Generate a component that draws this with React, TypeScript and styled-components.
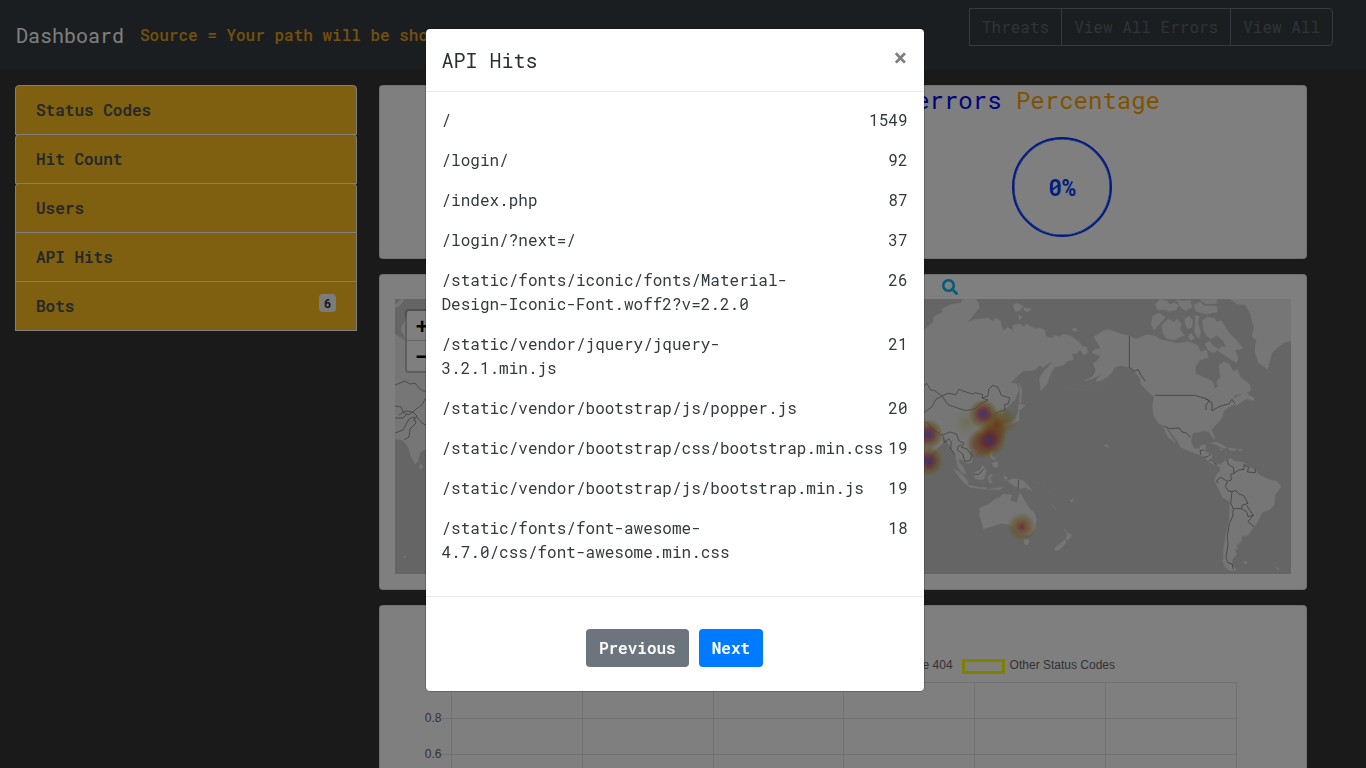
import React from "react";
import styled, { createGlobalStyle } from "styled-components";
import { FaSearch } from "react-icons/fa";

const Global = createGlobalStyle`
  * { box-sizing: border-box; }
  html, body { margin: 0; height: 100%; overflow: hidden; }
  body {
    background: #343434;
    color: #2a2f33;
    font: 400 16px/24px "Roboto Mono", "Liberation Mono", monospace;
  }
`;

const Page = styled.div`
  height: 768px;
  overflow: hidden;
`;

const Navbar = styled.header`
  display: flex;
  align-items: flex-start;
  height: 70px;
  padding: 8px 33px 0 16px;
  background: #343d42;
`;

const Brand = styled.div`
  margin-top: 12px;
  font-size: 20px;
  line-height: 30px;
  width: 108px;
  margin-right: 16px;
  color: #fff;
`;

const Source = styled.div`
  margin-top: 15px;
  font-weight: 500;
  color: #e8a21a;
`;

const ButtonGroup = styled.div`
  display: flex;
  margin-left: auto;
`;

const OutlineButton = styled.button`
  height: 38px;
  padding: 0 12px;
  font: inherit;
  color: #5f666c;
  background: transparent;
  border: 1px solid #6c757d;
  & + & { margin-left: -1px; }
  &:last-child { border-radius: 0 4px 4px 0; }
`;

const Content = styled.div`
  display: flex;
  align-items: flex-start;
  gap: 22px;
  padding: 15px 59px 0 15px;
`;

const Sidebar = styled.nav`
  flex: 0 0 342px;
`;

const SideItem = styled.div<{ $rounded?: boolean }>`
  display: flex;
  justify-content: space-between;
  height: 50px;
  margin-bottom: -1px;
  padding: 12px 20px;
  background: #ffc020;
  border: 1px solid #fff;
  border-radius: ${(p) => (p.$rounded ? "4px 4px 0 0" : "0")};
  color: #495057;
  font-weight: 500;
  -webkit-text-stroke: 0.2px currentColor;
`;

const Badge = styled.span`
  width: 17px;
  height: 18px;
  border-radius: 4px;
  background: #f8f9fa;
  color: #212529;
  font-size: 12px;
  line-height: 19px;
  text-align: center;
`;

const Main = styled.main`
  flex: 1;
  min-width: 0;
  display: flex;
  flex-direction: column;
  gap: 15px;
`;

const Card = styled.section<{ $height: number }>`
  height: ${(p) => p.$height}px;
  background: #fff;
  border: 1px solid rgba(0, 0, 0, 0.125);
  border-radius: 4px;
`;

const Title = styled.h2`
  margin: 0;
  padding-right: 146px;
  text-align: right;
  font-size: 24px;
  line-height: 29px;
  font-weight: 400;
  color: orange;
  span { color: blue; }
`;

const GaugeRow = styled.div`
  display: flex;
  justify-content: flex-end;
  padding: 22px 194px 0 0;
`;

const Gauge = styled.div`
  display: grid;
  place-items: center;
  width: 100px;
  height: 100px;
  border: 2px solid #0038ff;
  box-shadow: inset 0 0 0 0.5px #0038ff;
  border-radius: 50%;
  font-size: 23px;
  font-weight: 600;
  color: #0038ff;
`;

const MapCard = styled(Card)`
  display: flex;
  flex-direction: column;
  padding: 0 15px;
`;

const SearchRow = styled.div`
  display: flex;
  justify-content: flex-end;
  align-items: center;
  height: 24px;
  padding-right: 333px;
  color: #00b8f4;
`;

const MapArea = styled.div`
  position: relative;
  height: 275px;
`;

const ZoomControl = styled.div`
  position: absolute;
  left: 10px;
  top: 10px;
  width: 34px;
  border: 2px solid rgba(0, 0, 0, 0.2);
  background-clip: padding-box;
  border-radius: 4px;
  overflow: hidden;
`;

const ZoomButton = styled.div`
  height: 30px;
  padding-top: 4px;
  background: #fff;
  color: #000;
  font: 700 22px/28px "Liberation Mono", monospace;
  text-align: center;
  &:first-child { border-bottom: 1px solid #ccc; }
`;

const ChartCard = styled(Card)`
  padding: 50px 69px 0 24px;
  font: 12px/18px "Liberation Sans", Arial, sans-serif;
  color: #666;
`;

const Legend = styled.div`
  display: flex;
  justify-content: flex-end;
  gap: 9px;
  padding-right: 122px;
  height: 26px;
`;

const LegendItem = styled.div`
  display: flex;
  align-items: center;
  height: 18px;
  gap: 5px;
`;

const Swatch = styled.span<{ $color: string }>`
  width: 43px;
  height: 15px;
  margin-top: 2px;
  border: 3px solid ${(p) => p.$color};
  background: rgba(255, 255, 200, 0.3);
`;

const Backdrop = styled.div`
  position: fixed;
  inset: 0;
  display: flex;
  justify-content: center;
  align-items: flex-start;
  padding: 28px 17px 0 0;
  background: rgba(0, 0, 0, 0.5);
`;

const Dialog = styled.div`
  width: 500px;
  background: #fff;
  background-clip: padding-box;
  border: 1px solid rgba(0, 0, 0, 0.2);
  border-radius: 5px;
`;

const DialogHeader = styled.div`
  display: flex;
  justify-content: space-between;
  padding: 16px;
  height: 63px;
  border-bottom: 1px solid #e9ecef;
  font-size: 20px;
  line-height: 30px;
`;

const Close = styled.span`
  font-size: 24px;
  line-height: 24px;
  font-weight: 700;
  color: #7f7f7f;
`;

const DialogBody = styled.div`
  display: flex;
  flex-direction: column;
  gap: 16px;
  height: 504px;
  padding: 16px;
  color: #34393d;
`;

const HitRow = styled.div`
  display: flex;
  justify-content: space-between;
  white-space: pre;
`;

const DialogFooter = styled.div`
  display: flex;
  justify-content: center;
  gap: 10px;
  height: 95px;
  padding-top: 32px;
  border-top: 1px solid #e9ecef;
`;

const Button = styled.button<{ $bg: string }>`
  height: 38px;
  padding: 0 13px;
  border: 0;
  border-radius: 4px;
  font: inherit;
  font-weight: 500;
  -webkit-text-stroke: 0.2px currentColor;
  color: #fff;
  background: ${(p) => p.$bg};
`;

const hits: [string, number][] = [
  ["/", 1549],
  ["/login/", 92],
  ["/index.php", 87],
  ["/login/?next=/", 37],
  ["/static/fonts/iconic/fonts/Material-\nDesign-Iconic-Font.woff2?v=2.2.0", 26],
  ["/static/vendor/jquery/jquery-\n3.2.1.min.js", 21],
  ["/static/vendor/bootstrap/js/popper.js", 20],
  ["/static/vendor/bootstrap/css/bootstrap.min.css", 19],
  ["/static/vendor/bootstrap/js/bootstrap.min.js", 19],
  ["/static/fonts/font-awesome-\n4.7.0/css/font-awesome.min.css", 18],
];

const eastLand = [
  // Eurasia
  "M0 195L12 180L30 165L38 158L42 140L70 125L65 118L90 105L125 98L125 90L140 85H165L175 97L178 112L165 130L142 158L165 148L205 145L220 155L225 145L242 152L243 168L252 183L262 172L280 182L278 165L300 163L312 170L320 162L330 168L345 176L360 174L375 181L378 200L400 205L403 196L418 200L430 193L450 197L465 208L478 217L486 228L500 232L503 247L492 256L480 240L472 250L455 252L460 268L440 275L430 286L405 290L395 305L388 320L382 340L362 362L359 325L372 302L386 290L397 272L378 284L370 294L360 285L345 300L310 303L292 318L272 338L292 343L296 360L285 390L262 410L250 420L250 450L242 455L235 440L228 425L215 434L205 430L212 450L225 455L215 470L232 490L230 510L215 530L195 540L175 545L165 553L152 540L148 552L158 570L154 578L142 580L128 572L118 565L116 576L130 592L138 612L128 610L114 592L108 560L98 540L88 524L72 500L68 520L35 550L25 575L15 600L0 570Z",
  // Sakhalin and Japan
  "M298 340L306 362L303 395L298 402L300 370Z",
  "M297 402L316 406L303 418L294 420Z",
  "M298 420L297 450L284 460L262 466L248 474L252 462L275 455L288 443Z",
  // Arctic islands
  "M280 105L290 100L310 108L300 122L284 124ZM312 113L334 118L325 125L312 122ZM296 135L306 142L298 150ZM456 178L468 174L472 181L462 184Z",
  // Indonesia and the Philippines
  "M100 596L120 608L146 636L140 646L118 622ZM142 644L175 652L200 653L200 658L150 652ZM160 610L180 600L188 586L200 602L190 630L166 626ZM205 620L214 612L218 616L210 624L216 638L208 640ZM210 540L218 542L215 558L226 566L220 570L210 558ZM216 580L232 574L234 590L222 592ZM250 618L262 622L258 632ZM262 632L280 626L310 632L330 654L336 662L316 652L300 656L280 646ZM206 658L250 652L240 659Z",
  // Australia and Tasmania
  "M180 714L205 704L225 688L238 684L250 672L276 676L270 690L290 700L300 668L312 690L326 712L344 730L349 750L344 778L325 795L300 796L284 776L268 763L245 760L220 768L190 776L186 760L179 735ZM312 808L328 810L322 825L314 822Z",
  // New Zealand
  "M433 776L444 790L456 794L446 810L438 806L442 794ZM436 808L438 818L420 838L406 842L404 835Z",
  // Scattered Pacific islands
  "M394 705L408 716L402 712ZM450 692L462 686L456 696ZM552 527L560 524L568 534Z",
];

const westLand = [
  // North America
  "M-12 212L-18 200L10 182L25 179L55 190L88 197L107 208L140 194L165 198L180 208L200 213L232 220L265 215L292 226L302 246L320 240L325 262L300 270L287 288L286 310L310 322L337 334L345 358L354 348L350 335L362 322L358 302L358 285L372 276L388 282L400 305L412 298L420 320L450 345L452 362L430 370L405 375L398 386L440 366L444 374L462 384L462 391L438 387L410 406L405 402L385 412L370 425L365 445L345 467L334 480L346 504L342 508L328 486L310 482L295 487L278 488L273 515L282 536L298 537L303 526L318 524L314 543L322 548L337 555L333 574L345 584L359 582L358 590L342 583L325 575L310 558L285 550L242 532L232 512L205 477L196 472L214 500L227 519L204 502L190 468L175 459L161 435L158 408L162 382L142 362L124 344L120 325L103 305L88 292L60 286L45 291L25 315L-10 335L-10 328L8 310L-12 302L-20 280L-5 270L0 258L-25 248L-15 238L2 236L-4 222Z",
  // Alaska Peninsula
  "M20 292L44 288L36 306L22 320L-2 334L2 322L16 312ZM-10 296L8 310L-20 325L-45 332L-20 318Z",
  // Greenland
  "M388 86H573V212L552 217L530 235L515 250L503 297L476 278L465 245L466 225L470 212L456 200L462 172L450 130L436 104L412 102Z",
  // Canadian Arctic
  "M158 138L178 130L196 142L186 154L175 164L162 180L154 165ZM185 165L204 148L222 156L232 148L244 160L240 180L254 196L238 202L224 210L200 206L190 192ZM165 104L180 88L200 92L210 104L222 98L236 106L228 120L208 124L190 118L174 120ZM230 90L250 94L270 90L276 112L256 122L242 112ZM254 148L266 138L278 150L276 172L262 176L256 162ZM286 136L298 140L294 158L302 184L296 206L284 188ZM282 104L300 96L312 108L350 108L352 126L320 132L288 124ZM300 90L350 88L350 100L320 102ZM308 150L324 142L344 146L350 156L364 152L376 170L388 190L408 210L428 234L414 240L405 235L414 266L410 278L392 268L374 256L354 244L364 230L378 232L370 212L350 196L334 206L322 200L310 178ZM315 222L330 214L342 230L356 238L342 248L324 240ZM272 190L284 204L274 212L264 200Z",
  // Caribbean
  "M332 520L350 516L372 528L382 534L366 534L350 524ZM386 534L410 536L404 543L388 540ZM358 538L368 538L366 542ZM416 538H424V542H416Z",
  // South America
  "M360 585L375 572L393 565L402 573L430 577L445 590L465 598L475 613L510 630L530 634L542 648L538 658L525 675L522 705L510 718L485 728L480 742L466 765L450 785L444 796L425 799L424 814L410 825L412 838L404 840L410 852L396 870L396 885L410 900L390 903L376 892L369 875L371 840L379 790L388 750L390 697L368 681L355 655L344 632L350 612L360 603Z",
  "M430 876L442 874L438 882ZM528 890L538 898L532 898Z",
];

const eastBorders =
  "M12 348L20 340L32 360L44 362L66 378L48 388L36 410L12 428M66 378L84 370L108 374L116 358L138 366L158 372L166 368L188 374L186 384L204 390L180 402L166 416L138 422L112 414L84 404ZM186 384L204 378L206 358L218 346L234 352L244 376L270 384L264 402L254 404V420L226 430M12 456L24 460L36 476L66 496L90 486L110 492L116 512L132 520L124 532L140 536L156 556L150 572L134 574L128 552L112 540L114 530L124 524M68 498L74 518L86 506L94 516L92 536L106 556M160 612L176 614L190 598M295 630V656";
const westBorders =
  "M88 197V292L104 304L114 298L122 314L136 334M165 376H284L312 384L336 398V422L362 408L386 402L396 388L404 400M316 384L328 392L318 406V420M192 468L208 476L238 474L246 486L258 488L272 502M303 554L300 542L312 540M312 562L324 560L332 552M326 574L334 568M344 580L350 585M380 568L386 584L400 592L402 610L392 614L394 630L382 634L362 622L350 632L354 640M402 610L416 600L432 598L432 584L446 592L442 606L466 608L466 596M382 634L376 650L386 664L396 664L408 662L414 670L432 678L444 700L426 706L424 716H400L392 698L396 664M400 716L398 740L388 760L382 800L384 824L378 862L384 878L396 882L400 898M424 716L440 726L444 740L460 736L440 706M460 736L444 754L462 770";

const heat: [number, number, number, string][] = [
  [140, 458, 40, "faint"],
  [252, 452, 42, "haze"],
  [228, 462, 42, "warm"],
  [190, 432, 45, "hot"],
  [24, 493, 46, "hot"],
  [24, 573, 46, "hot"],
  [184, 522, 46, "broad"],
  [222, 488, 42, "broad"],
  [208, 510, 52, "hot"],
  [305, 771, 44, "warm"],
];

function WorldMap() {
  return (
    <svg width="896" height="275" viewBox="0 0 896 275" style={{ display: "block" }}>
      <defs>
        <radialGradient id="hot">
          <stop offset="0" stopColor="#6a60e0" stopOpacity=".85" />
          <stop offset=".16" stopColor="#8850a8" stopOpacity=".8" />
          <stop offset=".38" stopColor="#c84c60" stopOpacity=".72" />
          <stop offset=".62" stopColor="#d08440" stopOpacity=".58" />
          <stop offset=".82" stopColor="#c4b040" stopOpacity=".42" />
          <stop offset="1" stopColor="#c4c440" stopOpacity="0" />
        </radialGradient>
        <radialGradient id="broad">
          <stop offset="0" stopColor="#b84868" stopOpacity=".75" />
          <stop offset=".45" stopColor="#d05850" stopOpacity=".65" />
          <stop offset=".72" stopColor="#d09040" stopOpacity=".45" />
          <stop offset="1" stopColor="#c4c440" stopOpacity="0" />
        </radialGradient>
        <radialGradient id="warm">
          <stop offset="0" stopColor="#d84c4c" stopOpacity=".85" />
          <stop offset=".3" stopColor="#d07840" stopOpacity=".65" />
          <stop offset=".65" stopColor="#c8a848" stopOpacity=".48" />
          <stop offset="1" stopColor="#c4c440" stopOpacity="0" />
        </radialGradient>
        <radialGradient id="haze">
          <stop offset="0" stopColor="#d08c40" stopOpacity=".6" />
          <stop offset=".5" stopColor="#c8a848" stopOpacity=".5" />
          <stop offset="1" stopColor="#c4c440" stopOpacity="0" />
        </radialGradient>
        <radialGradient id="faint">
          <stop offset="0" stopColor="#d0c860" stopOpacity=".45" />
          <stop offset="1" stopColor="#d8d070" stopOpacity="0" />
        </radialGradient>
      </defs>
      <rect width="896" height="275" fill="#cacaca" />
      <g fill="#ececec">
        <path d="M0 6L5 1L9 0L8 3L3 8L0 9ZM0 35L5 38L10 42L9 36L6 32L7 26L10 22L12 14H40V149H32L25 154L23 163L20 165L16 158L13 148L9 143L6 141L0 140Z" />
        <path d="M25 164L28 167L27 170L24 169ZM8 257L11 257L10 259Z" />
      </g>
      <path d="M0 86L5 84L10 82L15 85L20 84L24 89L28 92H34M0 107L6 108L8 113L13 116L18 113L21 110L27 106L30 100L34 98M4 116L10 112L18 113L22 117L18 122M0 119L8 119L12 115M0 134L8 131L14 120L19 118L21 124L15 130L14 138L9 141M21 117L27 124L34 128" fill="none" stroke="#848484" strokeWidth=".8" />
      <g transform="translate(525 -29) scale(.33333)">
        {eastLand.map((d) => (
          <path key={d} d={d} fill="#ececec" stroke="#ececec" strokeWidth="1.5" strokeLinejoin="round" />
        ))}
        <path d={eastBorders} fill="none" stroke="#7c7c7c" strokeWidth="2.2" />
        <path d="M430 352L450 357L495 359L530 350L555 333L575 315M340 634L370 645L400 674L412 684" fill="none" stroke="#ddd" strokeWidth="2" strokeDasharray="8 6" />
      </g>
      <g transform="translate(705 -29) scale(.33333)">
        {westLand.map((d) => (
          <path key={d} d={d} fill="#ececec" stroke="#ececec" strokeWidth="1.5" strokeLinejoin="round" />
        ))}
        <path d={westBorders} fill="none" stroke="#7c7c7c" strokeWidth="2.4" />
      </g>
      <g transform="translate(525 -29) scale(.33333)">
        {heat.map(([x, y, r, kind]) => (
          <circle key={`${x}-${y}`} cx={x} cy={y} r={r} fill={`url(#${kind})`} />
        ))}
      </g>
    </svg>
  );
}

function Chart() {
  return (
    <svg width="834" height="120" viewBox="404 682 834 120" fontFamily="Liberation Sans" fontSize="12">
      <g stroke="rgba(0,0,0,.1)">
        {[451.5, 582.5, 713.5, 843.5, 974.5, 1105.5, 1236.5].map((x) => (
          <line key={x} x1={x} x2={x} y1="682" y2="802" />
        ))}
        {[682.5, 718.5, 754.5, 790.5].map((y) => (
          <line key={y} x1="441" x2="1237" y1={y} y2={y} />
        ))}
      </g>
      <g fill="#666" textAnchor="end">
        <text x="441.5" y="722">0.8</text>
        <text x="441.5" y="758">0.6</text>
      </g>
    </svg>
  );
}

export default function App() {
  return (
    <Page>
      <Global />
      <Navbar>
        <Brand>Dashboard</Brand>
        <Source>Source = Your path will be shown here</Source>
        <ButtonGroup>
          <OutlineButton>Threats</OutlineButton>
          <OutlineButton>View All Errors</OutlineButton>
          <OutlineButton>View All</OutlineButton>
        </ButtonGroup>
      </Navbar>
      <Content>
        <Sidebar>
          <SideItem $rounded>Status Codes</SideItem>
          <SideItem $rounded>Hit Count</SideItem>
          <SideItem $rounded>Users</SideItem>
          <SideItem>API Hits</SideItem>
          <SideItem>
            Bots <Badge>6</Badge>
          </SideItem>
        </Sidebar>
        <Main>
          <Card $height={174}>
            <Title>
              <span>errors</span> Percentage
            </Title>
            <GaugeRow>
              <Gauge>0%</Gauge>
            </GaugeRow>
          </Card>
          <MapCard $height={316}>
            <SearchRow>
              <FaSearch size={16} />
            </SearchRow>
            <MapArea>
              <WorldMap />
              <ZoomControl>
                <ZoomButton>+</ZoomButton>
                <ZoomButton>−</ZoomButton>
              </ZoomControl>
            </MapArea>
          </MapCard>
          <ChartCard $height={400}>
            <Legend>
              <LegendItem>Status Code 404</LegendItem>
              <LegendItem>
                <Swatch $color="#ffff00" />
                Other Status Codes
              </LegendItem>
            </Legend>
            <Chart />
          </ChartCard>
        </Main>
      </Content>
      <Backdrop>
        <Dialog>
          <DialogHeader>
            API Hits
            <Close>×</Close>
          </DialogHeader>
          <DialogBody>
            {hits.map(([path, count]) => (
              <HitRow key={path}>
                <span>{path}</span>
                <span>{count}</span>
              </HitRow>
            ))}
          </DialogBody>
          <DialogFooter>
            <Button $bg="#6c757d">Previous</Button>
            <Button $bg="#007bff">Next</Button>
          </DialogFooter>
        </Dialog>
      </Backdrop>
    </Page>
  );
}
